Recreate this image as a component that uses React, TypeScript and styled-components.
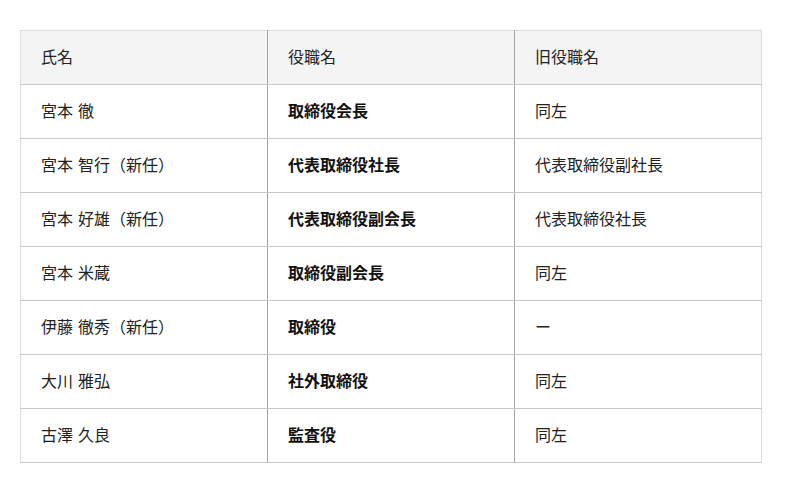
import React from "react";
import styled, { createGlobalStyle } from "styled-components";

const GlobalStyle = createGlobalStyle`
  html, body {
    margin: 0;
    padding: 0;
    background: #ffffff;
  }
  body {
    font-family: "Noto Sans CJK JP", "Noto Sans", sans-serif;
    color: #222222;
  }
`;

const Page = styled.div`
  padding: 30px 0 0 20px;
`;

const Table = styled.table`
  width: 742px;
  border-collapse: collapse;
  table-layout: fixed;
  border: 1px solid #dddddd;
  font-size: 16px;
`;

const HeadRow = styled.tr`
  background: #f4f4f4;
`;

const Row = styled.tr`
  background: #ffffff;
`;

const Cell = styled.td<{ $bold?: boolean }>`
  height: 54px;
  padding: 0 20px 2px;
  box-sizing: border-box;
  vertical-align: middle;
  text-align: left;
  font-weight: ${(p) => (p.$bold ? 700 : 400)};
  color: ${(p) => (p.$bold ? "#111111" : "#222222")};
  border-bottom: 1px solid #c8c8c8;
  line-height: 1.2;
  word-spacing: 1.5px;
  white-space: nowrap;
  & + & {
    border-left: 1px solid #a6a6a6;
  }
`;

const HeadCell = styled(Cell).attrs({ as: "th" })`
  font-weight: 400;
  color: #222222;
`;

const rows: [string, string, string][] = [
  ["宮本 徹", "取締役会長", "同左"],
  ["宮本 智行（新任）", "代表取締役社長", "代表取締役副社長"],
  ["宮本 好雄（新任）", "代表取締役副会長", "代表取締役社長"],
  ["宮本 米蔵", "取締役副会長", "同左"],
  ["伊藤 徹秀（新任）", "取締役", "ー"],
  ["大川 雅弘", "社外取締役", "同左"],
  ["古澤 久良", "監査役", "同左"],
];

export default function App() {
  return (
    <>
      <GlobalStyle />
      <Page>
        <Table>
          <thead>
            <HeadRow>
              <HeadCell>氏名</HeadCell>
              <HeadCell>役職名</HeadCell>
              <HeadCell>旧役職名</HeadCell>
            </HeadRow>
          </thead>
          <tbody>
            {rows.map(([name, title, old]) => (
              <Row key={name}>
                <Cell>{name}</Cell>
                <Cell $bold>{title}</Cell>
                <Cell>{old}</Cell>
              </Row>
            ))}
          </tbody>
        </Table>
      </Page>
    </>
  );
}
